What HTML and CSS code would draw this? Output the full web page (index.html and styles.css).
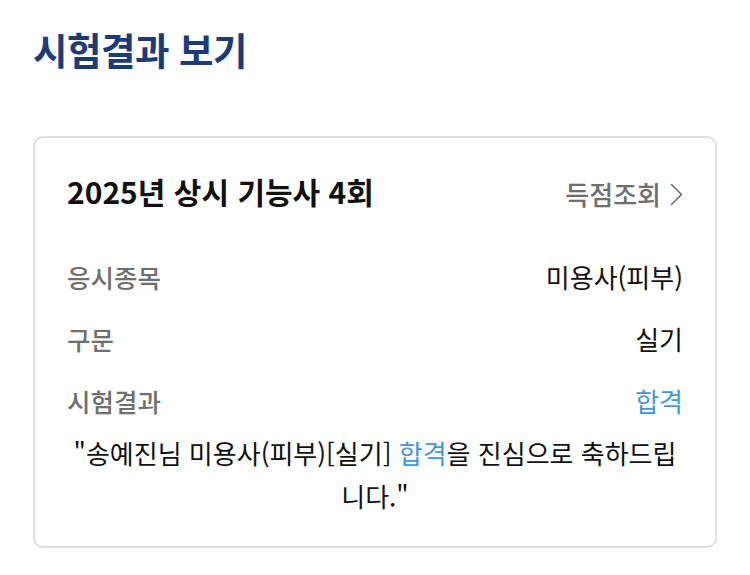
FILE: index.html
```html
<!DOCTYPE html>
<html lang="ko">
<head>
<meta charset="utf-8">
<title>시험결과 보기</title>
<link rel="stylesheet" href="styles.css">
</head>
<body>
<main class="page">
  <h1 class="page-title">시험결과 보기</h1>
  <section class="card">
    <div class="card-head">
      <h2 class="card-title">2025년 상시 기능사 4회</h2>
      <a class="score-link" href="#">득점조회<svg class="chev" width="13" height="23" viewBox="0 0 13 23"><polyline points="1.5,1.5 11.5,11.5 1.5,21.5" fill="none" stroke="#6e6e6e" stroke-width="1.6" stroke-linecap="round" stroke-linejoin="round"/></svg></a>
    </div>
    <div class="rows">
      <div class="row"><span class="label">응시종목</span><span class="value">미용사(피부)</span></div>
      <div class="row"><span class="label">구문</span><span class="value">실기</span></div>
      <div class="row"><span class="label">시험결과</span><span class="value pass">합격</span></div>
    </div>
    <p class="message">"송예진님 미용사(피부)[실기] <span class="pass">합격</span>을 진심으로 축하드립니다."</p>
  </section>
</main>
</body>
</html>
```
FILE: styles.css
```css
html, body {
  margin: 0;
  padding: 0;
  background: #ffffff;
}
body {
  font-family: "Noto Sans CJK KR", "Noto Sans", sans-serif;
  color: #111111;
}
.page {
  padding: 24px 33px 0 33px;
}
.page-title {
  margin: 0;
  font-size: 37.5px;
  line-height: 50px;
  font-weight: 700;
  color: #1b3b7b;
  letter-spacing: -0.5px;
}
.card {
  margin-top: 62px;
  border: 2px solid #dedede;
  border-radius: 10px;
  padding: 33px 32px 29px 32px;
}
.card-head {
  display: flex;
  justify-content: space-between;
  align-items: flex-end;
}
.card-title {
  margin: 0;
  font-size: 30px;
  line-height: 40px;
  font-weight: 700;
  color: #111111;
}
.score-link {
  display: flex;
  align-items: center;
  gap: 9px;
  font-size: 26px;
  line-height: 34px;
  font-weight: 500;
  color: #6e6e6e;
  text-decoration: none;
}
.chev {
  display: block;
}
.rows {
  margin-top: 34px;
}
.row {
  display: flex;
  justify-content: space-between;
  align-items: center;
  height: 62px;
  font-size: 25.5px;
}
.label {
  color: #6f6f6f;
  font-weight: 500;
}
.value {
  color: #111111;
  font-weight: 400;
  font-size: 26px;
}
.pass {
  color: #4596d8;
}
.message {
  margin: 0;
  text-align: center;
  font-size: 26px;
  line-height: 43px;
  color: #111111;
}
```
